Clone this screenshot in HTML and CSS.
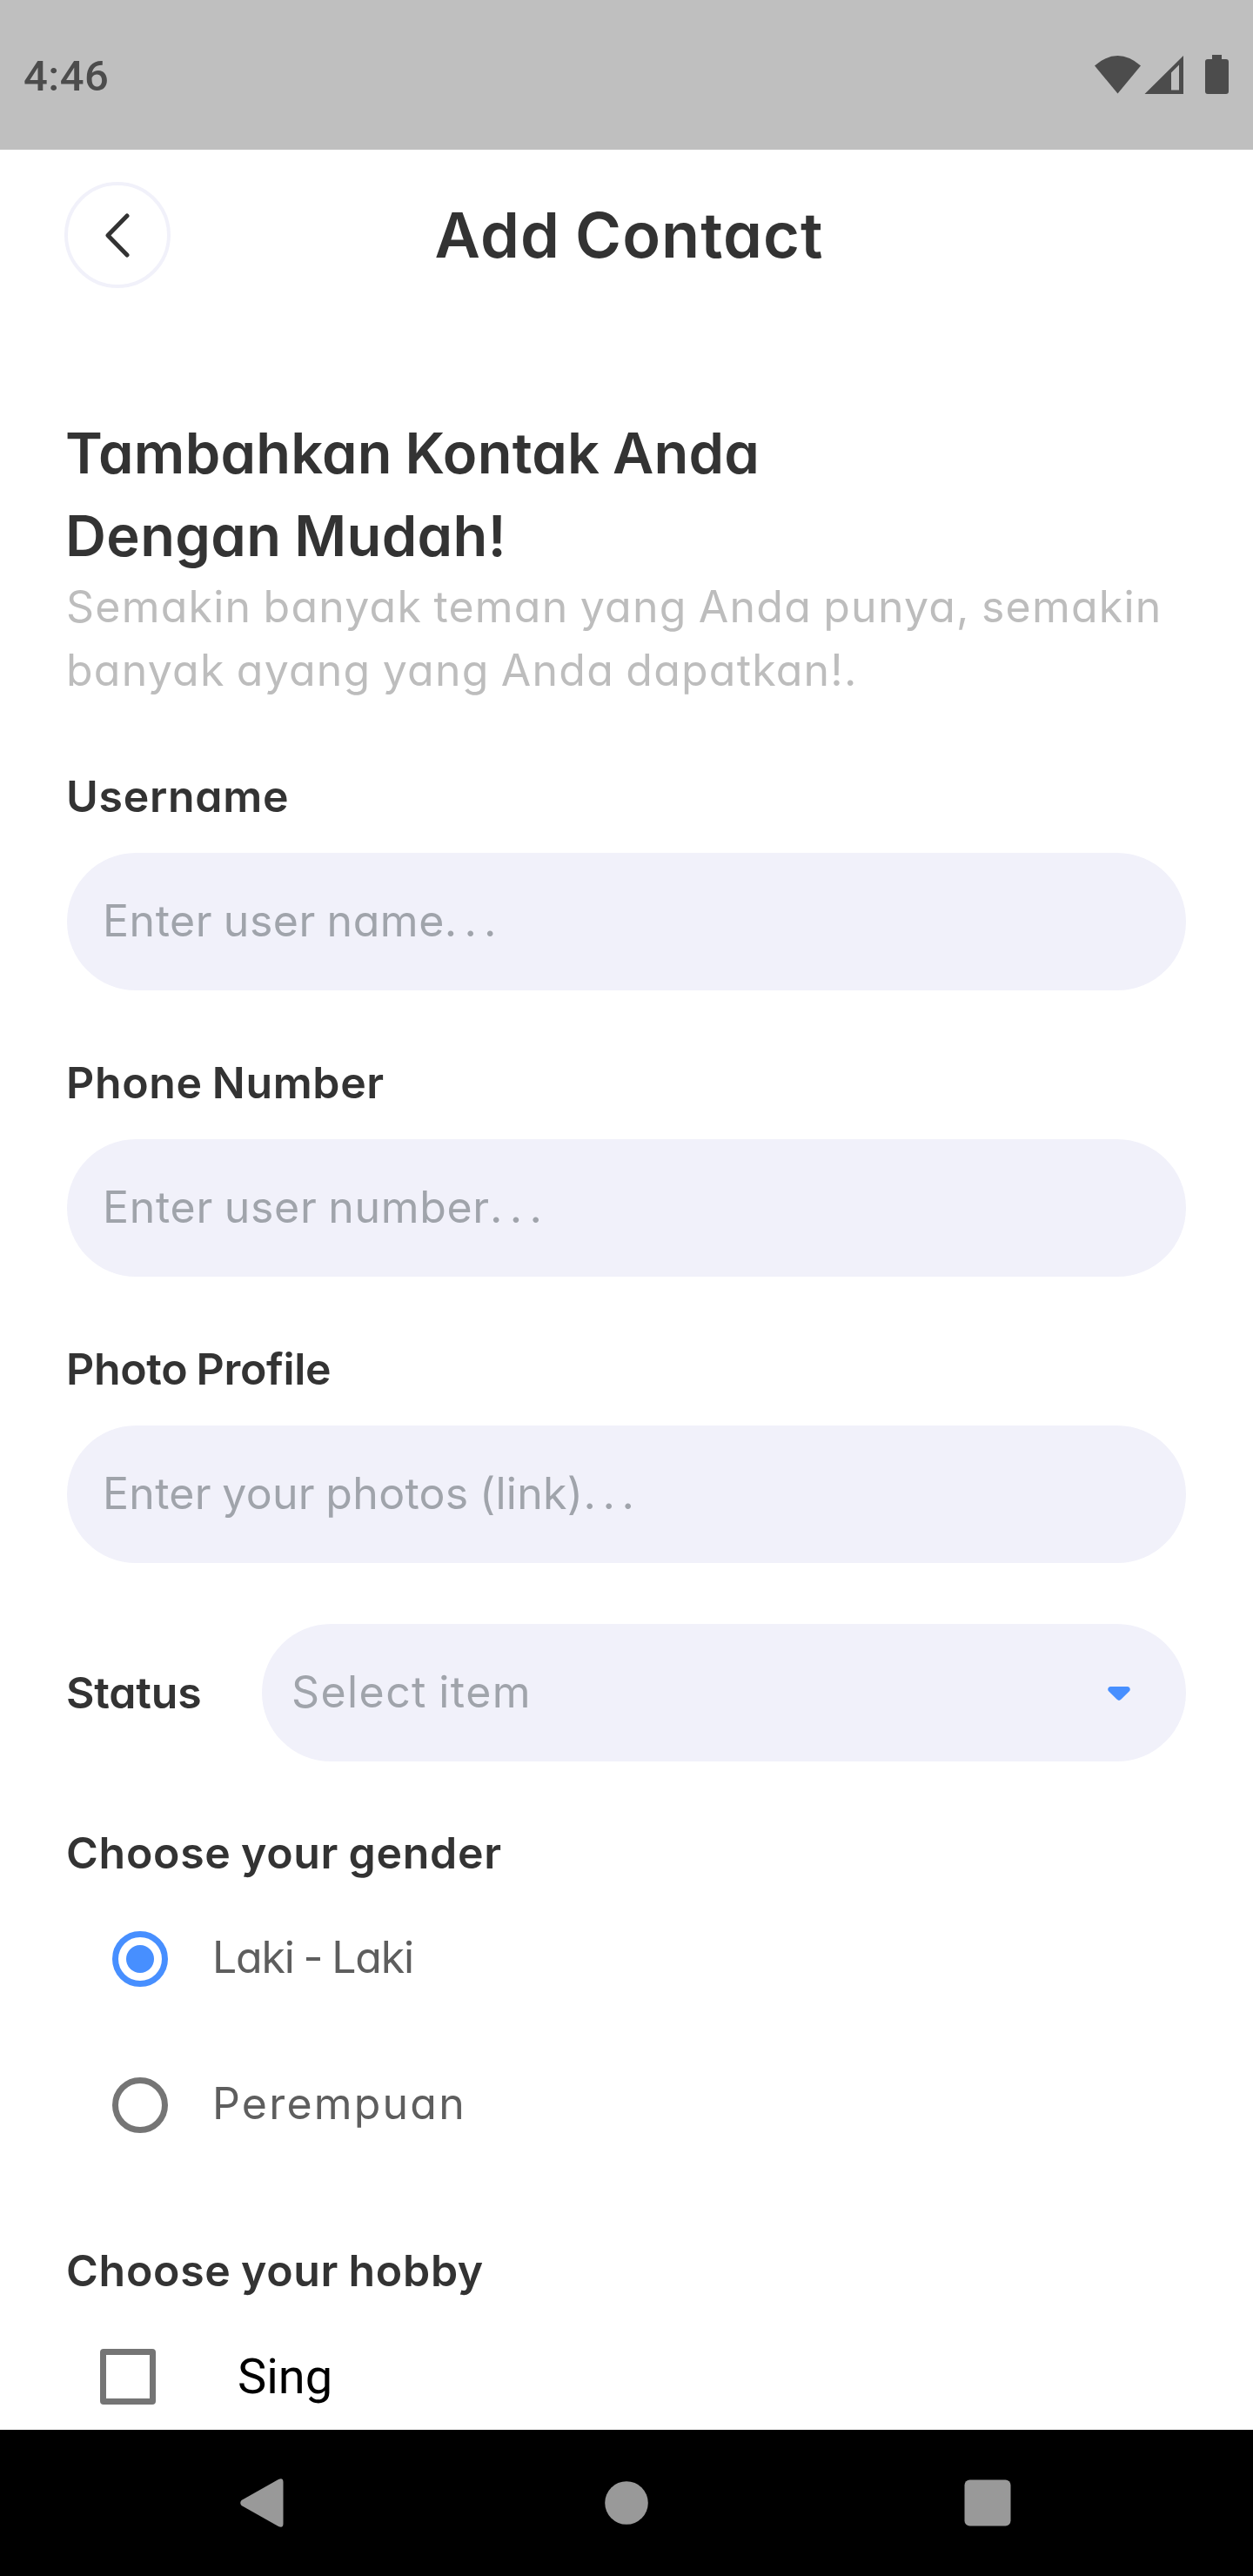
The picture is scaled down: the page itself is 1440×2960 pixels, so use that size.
FILE: index.html
```html
<!DOCTYPE html>
<html lang="id">
<head>
<meta charset="utf-8">
<title>Add Contact</title>
<link rel="stylesheet" href="styles.css">
</head>
<body>
<div class="screen">
  <header class="statusbar">
    <span class="clock">4:46</span>
    <svg class="status-icons" width="156" height="48" viewBox="0 0 156 48" fill="#4c4c4c">
      <path d="M2 13.500Q28.500-9.500 55 13.500L28.500 45.500Z"/>
      <path fill-rule="evenodd" d="M59.500 46L104 2V46ZM90 21.500V41.500H99V12.500Z"/>
      <path d="M137 1h11v5h5q3 0 3 3v34q0 3-3 3h-21q-3 0-3-3V9q0-3 3-3h5z"/>
    </svg>
  </header>

  <main class="content">
    <div class="titlebar">
      <button class="back" aria-label="Back">
        <svg width="32" height="54" viewBox="0 0 32 54" fill="none" stroke="#333" stroke-width="5" stroke-linecap="round" stroke-linejoin="round"><path d="M27 5L5 27.500L27 50"/></svg>
      </button>
      <h1 class="title">Add Contact</h1>
    </div>

    <h2 class="headline"><span class="ls-head1">Tambahkan Kontak Anda</span><br><span class="ls-head2">Dengan Mudah!</span></h2>
    <p class="intro">Semakin banyak teman yang Anda punya, semakin<br>banyak ayang yang Anda dapatkan!.</p>

    <section class="group">
      <h3 class="label ls-username">Username</h3>
      <div class="field"><span class="hint ls-hint-name">Enter user name<span class="dots">. . .</span></span></div>
    </section>
    <section class="group">
      <h3 class="label ls-phone">Phone Number</h3>
      <div class="field"><span class="hint ls-hint-number">Enter user number<span class="dots">. . .</span></span></div>
    </section>
    <section class="group">
      <h3 class="label ls-photo">Photo Profile</h3>
      <div class="field"><span class="hint ls-hint-link">Enter your photos (link)<span class="dots">. . .</span></span></div>
    </section>

    <section class="group status-row">
      <h3 class="label ls-status">Status</h3>
      <div class="field select">
        <span class="hint ls-select">Select item</span>
        <svg class="caret" width="26" height="16" viewBox="0 0 26 16" fill="#478fff"><path d="M3.500 0H22.500C25.700 0 26.800 3.600 24.700 5.600L15.300 14.800Q13 17 10.700 14.800L1.300 5.600C-.8 3.600 .3 0 3.500 0Z"/></svg>
      </div>
    </section>

    <section class="group gender">
      <h3 class="label ls-choose">Choose your gender</h3>
      <div class="option">
        <span class="radio radio-on"></span>
        <span class="option-text ls-laki">Laki - Laki</span>
      </div>
      <div class="option">
        <span class="radio"></span>
        <span class="option-text ls-perempuan">Perempuan</span>
      </div>
    </section>

    <section class="group">
      <h3 class="label ls-choose">Choose your hobby</h3>
      <div class="option hobby">
        <span class="checkbox"></span>
        <span class="hobby-text">Sing</span>
      </div>
    </section>
  </main>

  <nav class="navbar">
    <svg width="56" height="58" viewBox="0 0 56 58" fill="#999"><path d="M1.500 26L44 2Q49.500-.5 49.500 5V53Q49.500 58.500 44 56L1.500 32Q-1 29 1.500 26Z"/></svg>
    <svg width="50" height="50" viewBox="0 0 50 50" fill="#999"><circle cx="25" cy="25" r="24.800"/></svg>
    <svg width="54" height="54" viewBox="0 0 54 54" fill="#999"><rect x=".5" y=".5" width="53" height="53" rx="6"/></svg>
  </nav>
</div>
</body>
</html>
```
FILE: styles.css
```css
* { box-sizing: border-box; margin: 0; }

body { background: #fff; }

.screen {
  display: grid;
  grid-template-rows: 172px minmax(0, 1fr) 168px;
  width: 1440px;
  height: 2960px;
  overflow: hidden;
  font-family: Inter, "Liberation Sans", sans-serif;
  font-feature-settings: "cv11";
  word-spacing: -2px;
  color: #333;
}

/* Android status bar */
.statusbar {
  display: flex;
  justify-content: space-between;
  align-items: center;
  padding: 0 28px 0 27px;
  background: #bfbfbf;
}
.clock {
  padding-top: 3px;
  font: 500 49px Roboto, sans-serif;
  letter-spacing: 0.46px;
  color: #4c4c4c;
}

.content {
  overflow: hidden;
  padding: 37px 77px 0;
}

.titlebar {
  display: grid;
  grid-template-columns: 122px 1fr 122px;
  margin: 0 -3px;
}
.back {
  display: flex;
  align-items: center;
  justify-content: center;
  width: 122px;
  height: 122px;
  padding: 0;
  border: 4px solid #f1f1fa;
  border-radius: 50%;
  background: none;
}
.title {
  padding-left: 6px;
  font-size: 72px;
  font-weight: 600;
  line-height: 122px;
  letter-spacing: 1.05px;
  text-align: center;
}

.headline {
  margin-top: 142px;
  margin-left: -2px;
  font-size: 65px;
  font-weight: 600;
  line-height: 95px;
}
.intro {
  margin-top: -2px;
  margin-left: -1px;
  font-size: 50px;
  line-height: 73px;
  letter-spacing: 1.22px;
  white-space: nowrap;
  color: #bdbdbd;
}

.group { margin-top: 70px; }
.intro + .group { margin-top: 72px; }

.label {
  margin-left: -1px;
  font-size: 50px;
  font-weight: 600;
  line-height: 72px;
  white-space: nowrap;
}

.field {
  display: flex;
  align-items: center;
  height: 158px;
  margin-top: 29px;
  padding-left: 41px;
  border-radius: 79px;
  background: #f1f1fa;
}
.hint {
  padding-bottom: 2px;
  font-size: 50px;
  white-space: nowrap;
  color: #a0a4ab;
}
.dots { word-spacing: -7px; }

.status-row {
  display: grid;
  grid-template-columns: 224px 1fr;
  align-items: center;
}
.select {
  justify-content: space-between;
  margin-top: 0;
  padding: 0 64px 0 34px;
}
.caret { margin-top: 2px; }

.gender { margin-top: 69px; }

.option {
  display: flex;
  align-items: center;
  gap: 51px;
  height: 168px;
  padding-left: 52px;
}
.label + .option { margin-top: 2px; }
.option-text {
  padding-bottom: 4px;
  font-size: 50px;
  color: #5e5e5e;
}
.radio {
  display: grid;
  place-items: center;
  width: 64px;
  height: 64px;
  border: 7px solid #757575;
  border-radius: 50%;
}
.radio-on { border-color: #478fff; }
.radio-on::before {
  content: "";
  width: 32px;
  height: 32px;
  border-radius: 50%;
  background: #478fff;
}

.hobby {
  gap: 94px;
  padding-left: 38px;
}
.checkbox {
  width: 64px;
  height: 64px;
  border: 7px solid #757575;
  border-radius: 4px;
}
.hobby-text {
  font: 56px Roboto, sans-serif;
  color: #000;
}

/* Android navigation bar */
.navbar {
  display: flex;
  align-items: center;
  justify-content: space-between;
  padding: 0 278px 0 276px;
  background: #000;
}

/* Tracking */
.ls-head1 { letter-spacing: 0.24px; }
.ls-head2 { letter-spacing: 0.38px; }
.ls-username { letter-spacing: 0.72px; }
.ls-phone { letter-spacing: 0.63px; }
.ls-photo { letter-spacing: -0.32px; }
.ls-status { letter-spacing: -0.2px; }
.ls-choose { letter-spacing: 0.71px; }
.ls-hint-name { letter-spacing: 0.55px; }
.ls-hint-number { letter-spacing: 0.7px; }
.ls-hint-link { letter-spacing: 0.3px; }
.ls-select { letter-spacing: 1.41px; }
.ls-laki { letter-spacing: -1.2px; word-spacing: -2px; }
.ls-perempuan { letter-spacing: 2.2px; }
```
